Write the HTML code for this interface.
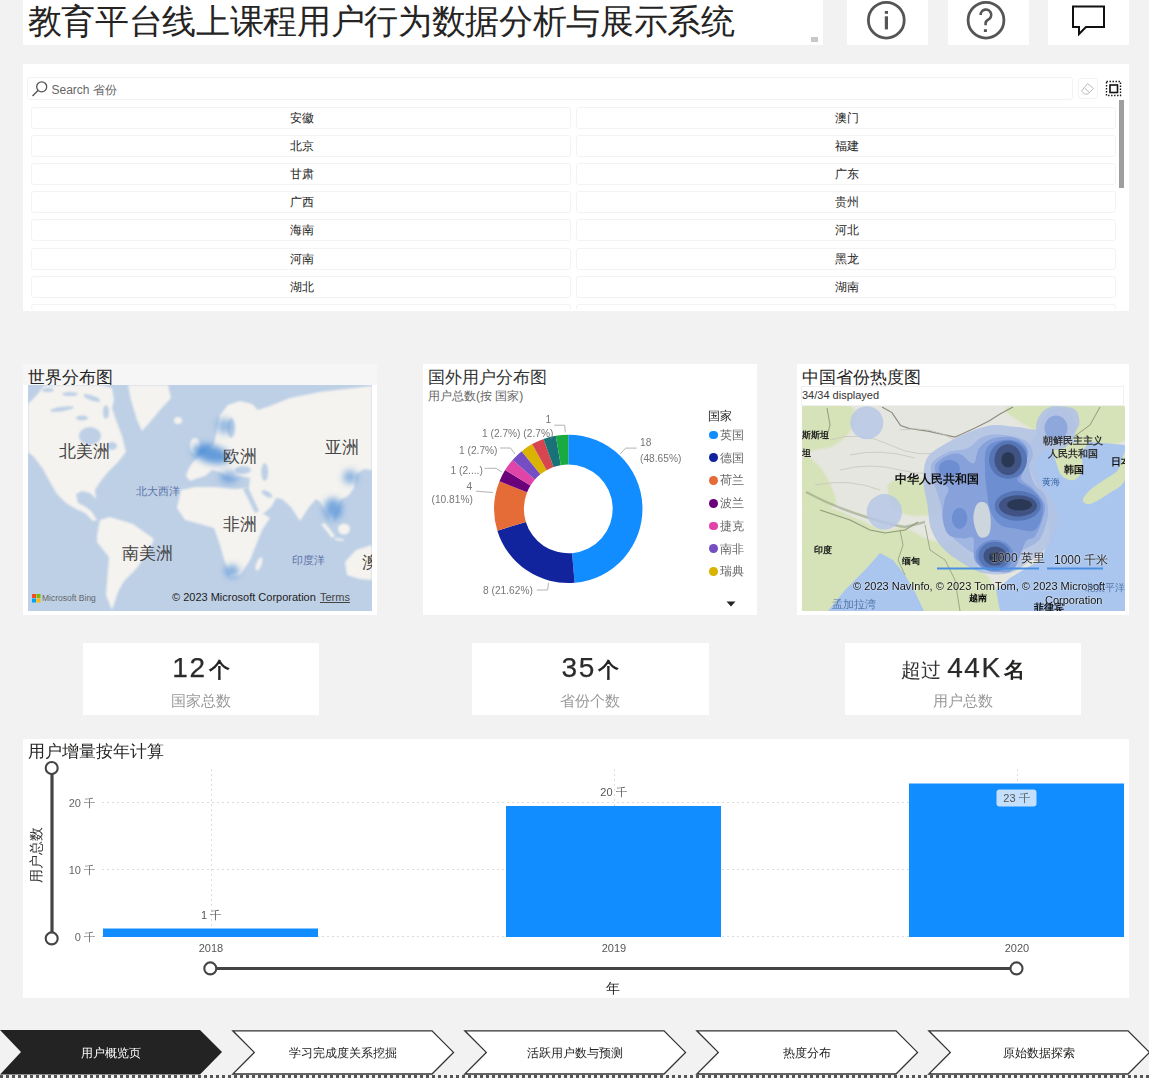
<!DOCTYPE html>
<html><head><meta charset="utf-8">
<style>
*{margin:0;padding:0;box-sizing:border-box}
html,body{width:1149px;height:1078px;overflow:hidden;background:#f2f2f2;font-family:"Liberation Sans",sans-serif;color:#252423}
.a{position:absolute}
.panel{position:absolute;background:#fff}
.t{position:absolute;white-space:nowrap;line-height:1}
.item{position:absolute;height:22px;border:1px solid #f3f3f3;border-radius:3px;background:#fff}
.lbl{position:absolute;white-space:nowrap;font-size:12px;line-height:1;color:#252423}
</style></head>
<body>
<!-- header -->
<div class="panel" style="left:23px;top:0;width:800px;height:45px"></div>
<div class="t" style="left:27.5px;top:4px;font-size:34px;letter-spacing:-0.33px;color:#252423">教育平台线上课程用户行为数据分析与展示系统</div>
<div class="a" style="left:811px;top:37px;width:7px;height:5px;background:#c8c8c8"></div>

<div class="panel" style="left:847px;top:0;width:81px;height:45px"></div>
<div class="panel" style="left:948px;top:0;width:81px;height:45px"></div>
<div class="panel" style="left:1048px;top:0;width:81px;height:45px"></div>
<svg class="a" style="left:0;top:0" width="1149" height="50">
  <circle cx="886.3" cy="20.2" r="17.9" fill="none" stroke="#555" stroke-width="2.8"/>
  <rect x="884.8" y="11" width="3.2" height="2.8" fill="#555"/>
  <rect x="884.8" y="16.3" width="3.2" height="13.1" fill="#555"/>
  <circle cx="986" cy="20.2" r="17.9" fill="none" stroke="#555" stroke-width="2.8"/>
  <path d="M980.6 15 a5.3 5.3 0 1 1 7.6 4.6 c-1.6 0.9 -2.6 1.8 -2.6 3.6 v2" fill="none" stroke="#555" stroke-width="2.6"/>
  <rect x="983.9" y="29.2" width="3" height="2.8" fill="#555"/>
  <path d="M1073 6.5 H1104 V27 H1086 L1079 34 V27 H1073 Z" fill="none" stroke="#111" stroke-width="2"/>
</svg>
<!-- slicer -->
<div class="panel" style="left:23px;top:64px;width:1106px;height:247px"></div>
<div class="item" style="left:27px;top:77px;width:1046px;height:23px;border-color:#f3f3f3"></div>
<svg class="a" style="left:30px;top:80px" width="20" height="20"><circle cx="11.7" cy="6.8" r="5" fill="none" stroke="#555" stroke-width="1.3"/><path d="M8.2 10.3 L2.5 16" stroke="#555" stroke-width="1.4"/></svg>
<div class="t" style="left:51.5px;top:83.5px;font-size:12px;color:#666">Search 省份</div>
<div class="item" style="left:1078px;top:78px;width:20px;height:21px;border-color:#f3f3f3"></div>
<svg class="a" style="left:1080px;top:82px" width="16" height="14"><path d="M7.5 1.5 L13.5 6.5 L8 12 H4.5 L1.5 9 Z M4.5 6 L9.5 10.5" fill="none" stroke="#bbb" stroke-width="1"/></svg>
<svg class="a" style="left:1105px;top:80px" width="18" height="18"><rect x="1.5" y="1.5" width="14" height="14" fill="none" stroke="#111" stroke-width="1.4" stroke-dasharray="1.4 1.6"/><rect x="5" y="5" width="7.5" height="7.5" fill="none" stroke="#111" stroke-width="1.6"/></svg>
<div class="a" style="left:1119px;top:100px;width:5px;height:88px;background:#9e9e9e"></div>
<div class="item" style="left:31px;top:106.5px;width:540px"></div>
<div class="item" style="left:576px;top:106.5px;width:540px"></div>
<div class="lbl" style="left:290px;top:111.5px">安徽</div>
<div class="lbl" style="left:835px;top:111.5px">澳门</div>
<div class="item" style="left:31px;top:134.7px;width:540px"></div>
<div class="item" style="left:576px;top:134.7px;width:540px"></div>
<div class="lbl" style="left:290px;top:139.7px">北京</div>
<div class="lbl" style="left:835px;top:139.7px">福建</div>
<div class="item" style="left:31px;top:162.9px;width:540px"></div>
<div class="item" style="left:576px;top:162.9px;width:540px"></div>
<div class="lbl" style="left:290px;top:167.9px">甘肃</div>
<div class="lbl" style="left:835px;top:167.9px">广东</div>
<div class="item" style="left:31px;top:191.1px;width:540px"></div>
<div class="item" style="left:576px;top:191.1px;width:540px"></div>
<div class="lbl" style="left:290px;top:196.1px">广西</div>
<div class="lbl" style="left:835px;top:196.1px">贵州</div>
<div class="item" style="left:31px;top:219.3px;width:540px"></div>
<div class="item" style="left:576px;top:219.3px;width:540px"></div>
<div class="lbl" style="left:290px;top:224.3px">海南</div>
<div class="lbl" style="left:835px;top:224.3px">河北</div>
<div class="item" style="left:31px;top:247.5px;width:540px"></div>
<div class="item" style="left:576px;top:247.5px;width:540px"></div>
<div class="lbl" style="left:290px;top:252.5px">河南</div>
<div class="lbl" style="left:835px;top:252.5px">黑龙</div>
<div class="item" style="left:31px;top:275.7px;width:540px"></div>
<div class="item" style="left:576px;top:275.7px;width:540px"></div>
<div class="lbl" style="left:290px;top:280.7px">湖北</div>
<div class="lbl" style="left:835px;top:280.7px">湖南</div>
<div class="item" style="left:31px;top:303.9px;width:540px;height:6px;border-bottom:none"></div>
<div class="item" style="left:576px;top:303.9px;width:540px;height:6px;border-bottom:none"></div>
<!-- row2 -->
<div class="panel" style="left:23px;top:364px;width:354px;height:251px"></div>
<div class="a" style="left:23px;top:364px;width:354px;height:21px;background:#f6f6f6"></div>
<div class="t" style="left:28px;top:368.5px;font-size:17px;color:#252423">世界分布图</div>
<!--WMAP-->
<svg class="a" style="left:28px;top:385px" width="344" height="226" viewBox="28 385 344 226">
<defs><filter id="bl" x="-50%" y="-50%" width="200%" height="200%"><feGaussianBlur stdDeviation="3.5"/></filter><filter id="bl2"><feGaussianBlur stdDeviation="1"/></filter></defs>
<rect x="28" y="385" width="344" height="226" fill="#bed0e6"/>
<g fill="#f5f3ef" filter="url(#bl2)">
<path d="M28 404 L36 396 L44 386 L60 385 L80 385 L100 385 L112 388 L114 400 L112 408 L116 420 L122 436 L126 452 L118 462 L108 472 L100 482 L95 490 L96 499 L90 493 L82 491 L76 494 L78 503 L86 507 L92 512 L97 520 L93 521 L85 513 L76 509 L66 503 L57 494 L50 482 L43 469 L34 457 L28 452 Z"/>
<path d="M128 385 L168 385 L171 398 L160 410 L150 422 L142 431 L137 420 L131 400 Z"/>
<path d="M97 535 L100 520 L110 517 L133 524 L154 539 L148 553 L136 569 L124 581 L118 592 L112 610 L106 595 L109 557 L97 542 Z"/>
<path d="M186 476 L188 470 L193 462 L200 456 L208 450 L214 444 L217 430 L220 415 L228 405 L240 401 L252 404 L258 410 L270 406 L290 398 L320 392 L345 389 L372 386 L372 470 L364 469 L356 474 L354 488 L348 496 L340 500 L336 510 L332 521 L326 512 L320 502 L316 499 L309 507 L300 521 L291 507 L282 499 L276 498 L272 506 L264 513 L257 514 L252 505 L247 493 L249 487 L250 478 L240 476 L232 478 L226 476 L220 472 L212 470 L205 476 L198 478 L190 481 Z"/>
<path d="M181 490 L195 487 L215 487 L235 489 L248 488 L255 503 L262 513 L270 518 L262 530 L256 545 L250 560 L240 575 L231 577 L225 562 L219 542 L214 528 L200 524 L185 520 L177 508 Z"/>
<path d="M345 562 L356 550 L372 545 L372 580 L360 579 L347 575 Z"/>
<ellipse cx="178" cy="420.5" rx="4" ry="3.5"/><path d="M321 524 L325 523 L335 536 L332 538 Z"/><ellipse cx="344" cy="529" rx="6" ry="5.5"/><path d="M335 538 L344 539 L343 541 L335 540 Z"/><ellipse cx="195" cy="446" rx="5" ry="8"/>
<ellipse cx="259" cy="564" rx="2.6" ry="7" transform="rotate(20 259 564)"/>
</g>
<g fill="#bed0e6" filter="url(#bl2)"><ellipse cx="90" cy="436" rx="11" ry="9"/><ellipse cx="112" cy="446" rx="5" ry="4"/><ellipse cx="264.7" cy="472" rx="3.5" ry="9"/><ellipse cx="243" cy="470" rx="8" ry="4"/><ellipse cx="267" cy="494" rx="6" ry="2.5" transform="rotate(30 267 494)"/><path d="M243 489 L248 487 L259 511 L255 513 Z"/><ellipse cx="231" cy="428" rx="4" ry="10"/><ellipse cx="62" cy="409" rx="12" ry="2.2" transform="rotate(-8 62 409)"/><ellipse cx="92" cy="398" rx="9" ry="2.5" transform="rotate(20 92 398)"/><ellipse cx="70" cy="394" rx="8" ry="2"/><ellipse cx="106" cy="412" rx="3" ry="7"/><ellipse cx="48" cy="390" rx="6" ry="2"/><ellipse cx="82" cy="418" rx="6" ry="2.5"/></g>
<g filter="url(#bl)" fill="#3f86d6">
<ellipse cx="211" cy="454" rx="19" ry="9" transform="rotate(15 211 454)" opacity="0.8"/>
<ellipse cx="224" cy="426" rx="7" ry="8" opacity="0.55"/>
<ellipse cx="229" cy="477" rx="9" ry="6" opacity="0.6"/>
<ellipse cx="350" cy="477" rx="7" ry="7" opacity="0.6"/>
<ellipse cx="333" cy="509" rx="9" ry="11" opacity="0.7"/>
<ellipse cx="232" cy="571" rx="7" ry="6" opacity="0.7"/>
</g>
</svg>
<div class="a" style="left:28px;top:385px;width:344px;height:226px;overflow:hidden"><div class="a" style="left:-28px;top:-385px;width:1149px;height:1078px"><div class="t" style="left:59px;top:443px;font-size:17px;color:#444;">北美洲</div>
<div class="t" style="left:223px;top:447.5px;font-size:17px;color:#444;">欧洲</div>
<div class="t" style="left:325px;top:438.5px;font-size:17px;color:#444;">亚洲</div>
<div class="t" style="left:223px;top:515.5px;font-size:17px;color:#444;">非洲</div>
<div class="t" style="left:122px;top:544.5px;font-size:17px;color:#444;">南美洲</div>
<div class="t" style="left:136px;top:485.5px;font-size:11px;color:#5b73a8;">北大西洋</div>
<div class="t" style="left:292px;top:554.5px;font-size:11px;color:#5b73a8;">印度洋</div>
<div class="t" style="left:362px;top:553.5px;font-size:17px;color:#444;">澳</div>
<div class="t" style="left:172px;top:592px;font-size:11px;color:#222;">© 2023 Microsoft Corporation</div>
<div class="t" style="left:320px;top:592px;font-size:11px;color:#444;text-decoration:underline">Terms</div>
<svg class="a" style="left:32px;top:594px" width="9" height="9"><rect x="0" y="0" width="4" height="4" fill="#f25022"/><rect x="4.5" y="0" width="4" height="4" fill="#7fba00"/><rect x="0" y="4.5" width="4" height="4" fill="#00a4ef"/><rect x="4.5" y="4.5" width="4" height="4" fill="#ffb900"/></svg>
<div class="t" style="left:42px;top:594px;font-size:8.5px;color:#666;">Microsoft Bing</div></div></div>
<!--/WMAP-->
<div class="panel" style="left:423px;top:364px;width:334px;height:251px"></div>
<div class="t" style="left:428px;top:368.5px;font-size:17px;color:#333">国外用户分布图</div>
<div class="t" style="left:428px;top:389.5px;font-size:12px;color:#666">用户总数(按 国家)</div>
<div class="panel" style="left:797px;top:364px;width:332px;height:251px"></div>
<div class="t" style="left:802px;top:368.5px;font-size:17px;color:#252423">中国省份热度图</div>
<div class="a cmaptitlebox" style="left:801px;top:386px;width:323px;height:20px;border:1px solid #f0f0f0"></div>
<div class="t" style="left:802px;top:390px;font-size:11px;color:#333">34/34 displayed</div>
<!--CMAP-->
<svg class="a" style="left:802px;top:406px" width="323" height="205" viewBox="802 406 323 205">
<defs><filter id="cb"><feGaussianBlur stdDeviation="1.2"/></filter><filter id="cb2"><feGaussianBlur stdDeviation="0.6"/></filter></defs>
<rect x="802" y="406" width="323" height="205" fill="#e6e6e0"/>
<g fill="#d6e2b8" filter="url(#cb)">
<path d="M802 406 C810.0 398.3 841.7 402.3 850 406 C858.3 409.7 854.5 421.5 852 428 C849.5 434.5 841.2 441.3 835 445 C828.8 448.7 820.5 448.8 815 450 C809.5 451.2 804.2 459.3 802 452 C799.8 444.7 794.0 413.7 802 406 Z"/>
<path d="M802 458 C804.2 450.8 810.7 458.3 815 462 C819.3 465.7 824.7 472.8 828 480 C831.3 487.2 839.3 500.8 835 505 C830.7 509.2 807.5 512.8 802 505 C796.5 497.2 799.8 465.2 802 458 Z"/>
<path d="M802 505 C806.7 487.8 820.3 505.5 830 508 C839.7 510.5 850.8 516.3 860 520 C869.2 523.7 877.5 528.7 885 530 C892.5 531.3 897.5 526.3 905 528 C912.5 529.7 921.2 537.2 930 540 C938.8 542.8 950.2 540.8 958 545 C965.8 549.2 971.3 558.7 977 565 C982.7 571.3 988.5 575.3 992 583 C995.5 590.7 1029.7 606.3 998 611 C966.3 615.7 834.7 628.7 802 611 C769.3 593.3 797.3 522.2 802 505 Z"/>
<path d="M1012 406 C1029.5 403.3 1106.2 400.3 1125 406 C1143.8 411.7 1130.8 433.5 1125 440 C1119.2 446.5 1100.8 445.0 1090 445 C1079.2 445.0 1068.3 442.2 1060 440 C1051.7 437.8 1046.7 435.0 1040 432 C1033.3 429.0 1024.7 426.3 1020 422 C1015.3 417.7 994.5 408.7 1012 406 Z"/>
<path d="M888 485 C890.5 479.3 906.3 478.0 915 478 C923.7 478.0 935.0 480.5 940 485 C945.0 489.5 946.7 500.0 945 505 C943.3 510.0 937.5 513.8 930 515 C922.5 516.2 907.0 517.0 900 512 C893.0 507.0 885.5 490.7 888 485 Z"/>
</g>
<g fill="#aac6ee" filter="url(#cb2)">
<path d="M1040 430 L1070 440 L1125 445 L1125 611 L1000 611 L996 590 L1010 578 L1040 560 L1050 540 L1048 515 L1040 492 L1030 470 L1025 450 Z"/>
<path d="M880 553 L893 560 L905 575 L915 592 L924 611 L828 611 L845 590 L865 570 Z"/>
</g>
<g fill="#d6e2b8" filter="url(#cb2)">
<path d="M1052 440 C1054.0 436.3 1063.3 438.0 1068 440 C1072.7 442.0 1077.7 447.0 1080 452 C1082.3 457.0 1083.0 465.3 1082 470 C1081.0 474.7 1077.3 479.0 1074 480 C1070.7 481.0 1065.0 479.0 1062 476 C1059.0 473.0 1057.7 468.0 1056 462 C1054.3 456.0 1050.0 443.7 1052 440 Z"/>
<path d="M1125 452 C1123.8 450.3 1121.5 465.3 1118 470 C1114.5 474.7 1108.7 476.7 1104 480 C1099.3 483.3 1093.5 486.7 1090 490 C1086.5 493.3 1083.0 497.7 1083 500 C1083.0 502.3 1085.8 505.0 1090 504 C1094.2 503.0 1102.2 498.0 1108 494 C1113.8 490.0 1122.2 487.0 1125 480 C1127.8 473.0 1126.2 453.7 1125 452 Z"/>
<path d="M1063 446 C1062.2 444.3 1070.5 443.3 1075 442 C1079.5 440.7 1089.2 436.3 1090 438 C1090.8 439.7 1084.5 450.7 1080 452 C1075.5 453.3 1063.8 447.7 1063 446 Z"/>
</g>
<path d="M882 407 L892 412.6 L900.6 425.6 L909 428.4 L929 431.3 L955 437 L962 434 L975 428 L989 421 L1000 414 L1013 407" fill="none" stroke="#8c8c80" stroke-width="1.2"/>
<path d="M820 510 L850 520 L870 530 L885 533 L905 530 L918 522" fill="none" stroke="#7e8a6a" stroke-width="1.2" opacity="0.8"/>
<path d="M827 408 L830 425 L826 440" fill="none" stroke="#7e8a6a" stroke-width="1" opacity="0.8"/>
<g fill="none" stroke="#c9c9c0" stroke-width="1" opacity="0.9">
<path d="M830 440 Q860 430 890 445 T950 450"/>
<path d="M840 470 Q870 462 900 470 T960 468"/>
<path d="M815 485 Q850 478 880 490"/>
<path d="M900 430 Q930 425 955 440"/>
<path d="M850 455 Q880 448 915 458"/>
</g>
<path d="M806 492 Q830 505 860 515 T905 527 L925 522" fill="none" stroke="#8e9a78" stroke-width="2.5" opacity="0.55"/>
<path d="M900 530 L903 545 L898 560 L905 575" fill="none" stroke="#8e9a78" stroke-width="1" opacity="0.8"/>
<path d="M925 525 L930 550 L945 560 L955 580 L960 611" fill="none" stroke="#8e9a78" stroke-width="1" opacity="0.8"/>
<path d="M1063 446 L1075 436 L1090 425 L1100 407" fill="none" stroke="#7e8a6a" stroke-width="1" opacity="0.8"/>
<g filter="url(#cb2)">
<path d="M927.3 457.8 C930.8 451.7 937.9 448.5 944.6 444.3 C951.3 440.1 959.6 436.0 967.6 432.8 C975.6 429.6 984.3 426.1 992.6 425.1 C1000.9 424.2 1010.2 426.5 1017.6 427.1 C1025.0 427.8 1032.3 430.9 1036.8 429.0 C1041.3 427.1 1041.0 419.2 1044.5 415.5 C1048.0 411.8 1052.8 407.8 1057.9 406.9 C1063.0 405.9 1071.7 406.8 1075.2 409.8 C1078.7 412.8 1080.3 420.3 1079.0 425.1 C1077.7 429.9 1073.2 434.1 1067.5 438.6 C1061.8 443.1 1049.9 447.5 1044.5 452.0 C1039.1 456.5 1035.2 460.1 1034.9 465.5 C1034.6 470.9 1039.6 478.9 1042.5 484.7 C1045.4 490.4 1049.5 494.2 1052.1 500.0 C1054.7 505.8 1057.9 512.9 1057.9 519.3 C1057.9 525.7 1054.3 533.4 1052.1 538.5 C1049.9 543.6 1048.3 546.2 1044.5 550.0 C1040.7 553.8 1034.9 557.7 1029.1 561.5 C1023.3 565.3 1017.6 571.1 1009.9 573.0 C1002.2 574.9 991.3 574.9 983.0 573.0 C974.7 571.1 966.6 565.6 959.9 561.5 C953.2 557.4 947.5 553.5 942.7 548.1 C937.9 542.7 933.7 536.3 931.1 528.9 C928.5 521.5 928.6 511.9 927.3 503.9 C926.0 495.9 923.4 488.5 923.4 480.8 C923.4 473.1 923.8 463.9 927.3 457.8 Z" fill="#b3c3e4" opacity="0.9"/>
<ellipse cx="1056" cy="428" rx="20" ry="22" fill="#b3c3e4" opacity="0.9"/>
<circle cx="866.8" cy="422.7" r="16.5" fill="#b6c7e6" opacity="0.85"/>
<circle cx="884.4" cy="511.8" r="17.7" fill="#b6c7e6" opacity="0.85"/>
<path d="M933.1 461.6 C936.0 458.4 942.6 454.2 948.4 452.0 C954.1 449.8 961.8 450.8 967.6 448.2 C973.4 445.6 977.2 438.9 983.0 436.7 C988.8 434.4 995.2 434.1 1002.2 434.7 C1009.2 435.3 1020.2 437.3 1025.3 440.5 C1030.4 443.7 1032.3 449.4 1032.9 453.9 C1033.5 458.4 1028.8 462.3 1029.1 467.4 C1029.4 472.5 1032.3 480.2 1034.9 484.7 C1037.5 489.2 1042.3 489.8 1044.5 494.3 C1046.7 498.8 1048.3 505.8 1048.3 511.6 C1048.3 517.4 1046.4 523.8 1044.5 528.9 C1042.6 534.0 1041.3 538.5 1036.8 542.3 C1032.3 546.1 1024.0 549.3 1017.6 551.9 C1011.2 554.5 1005.5 557.4 998.4 557.7 C991.3 558.0 982.0 556.4 975.3 553.8 C968.6 551.2 963.1 546.8 958.0 542.3 C952.9 537.8 947.5 533.3 944.6 526.9 C941.7 520.5 942.3 510.6 940.7 503.9 C939.1 497.2 936.6 492.1 935.0 486.6 C933.4 481.2 931.4 475.4 931.1 471.2 C930.8 467.0 930.2 464.8 933.1 461.6 Z" fill="#a2b6e2"/>
<ellipse cx="1056" cy="428" rx="11.5" ry="12.5" fill="#8ea8dc"/>
<path d="M935.0 465.5 C936.3 461.7 942.4 457.8 946.5 455.9 C950.6 454.0 955.4 452.6 959.9 453.9 C964.4 455.2 970.2 464.4 973.4 463.5 C976.6 462.6 976.0 452.3 979.2 448.2 C982.4 444.1 986.9 440.4 992.6 438.6 C998.4 436.8 1007.9 436.0 1013.7 437.6 C1019.5 439.2 1025.3 443.6 1027.2 448.2 C1029.1 452.8 1026.3 460.4 1025.3 465.5 C1024.3 470.6 1020.1 475.1 1021.4 478.9 C1022.7 482.7 1029.1 484.3 1032.9 488.5 C1036.8 492.7 1042.9 498.8 1044.5 503.9 C1046.1 509.0 1044.1 513.9 1042.5 519.3 C1040.9 524.7 1037.8 532.7 1034.9 536.5 C1032.0 540.3 1028.8 536.8 1025.3 542.3 C1021.8 547.8 1018.8 564.4 1013.7 569.2 C1008.6 574.0 1000.9 572.4 994.5 571.1 C988.1 569.8 978.8 566.9 975.3 561.5 C971.8 556.1 975.3 542.3 973.4 538.5 C971.5 534.7 968.0 539.1 963.8 538.5 C959.6 537.9 951.9 538.1 948.4 534.6 C944.9 531.1 943.3 523.1 942.7 517.3 C942.1 511.5 943.7 504.8 944.6 500.0 C945.5 495.2 949.4 492.0 948.4 488.5 C947.4 485.0 941.0 482.7 938.8 478.9 C936.6 475.1 933.7 469.3 935.0 465.5 Z" fill="#87a1da"/>
<path d="M986.8 448.2 C989.4 443.7 995.2 441.6 1000.3 440.5 C1005.4 439.4 1013.1 439.6 1017.6 441.5 C1022.1 443.4 1026.2 447.1 1027.2 452.0 C1028.2 456.9 1024.9 466.4 1023.3 471.2 C1021.7 476.0 1016.0 477.6 1017.6 480.8 C1019.2 484.0 1028.8 486.5 1032.9 490.4 C1037.1 494.2 1041.2 498.8 1042.5 503.9 C1043.8 509.0 1042.2 516.7 1040.6 521.2 C1039.0 525.7 1036.7 529.5 1032.9 530.8 C1029.1 532.1 1023.0 529.9 1017.6 528.9 C1012.2 527.9 1004.8 527.9 1000.3 525.0 C995.8 522.1 993.0 517.4 990.7 511.6 C988.5 505.8 987.8 497.8 986.8 490.4 C985.8 483.0 984.9 474.4 984.9 467.4 C984.9 460.4 984.2 452.7 986.8 448.2 Z" fill="#6e8ed2"/>
<ellipse cx="949.4" cy="468.4" rx="10.6" ry="8.6" fill="#6e8ed2"/>
<ellipse cx="959.6" cy="518.3" rx="7.7" ry="10.6" fill="#6e8ed2"/>
<ellipse cx="994.5" cy="555.7" rx="19" ry="16" fill="#6e8ed2"/>
<ellipse cx="1008" cy="459.7" rx="19" ry="19" fill="#5674b5"/>
<ellipse cx="1017.6" cy="505.8" rx="23" ry="15" fill="#5674b5"/>
<ellipse cx="994.5" cy="555.7" rx="16" ry="14" fill="#5674b5"/>
<ellipse cx="1008" cy="459.7" rx="13.4" ry="15.4" fill="#3f5282"/>
<ellipse cx="1018" cy="505.8" rx="19" ry="10.6" fill="#3f5282"/>
<ellipse cx="995" cy="556" rx="11.5" ry="9.6" fill="#3f5282"/>
<ellipse cx="1008" cy="459.7" rx="6.7" ry="7.7" fill="#2c3956"/>
<ellipse cx="1019.5" cy="504.8" rx="12.5" ry="5.8" fill="#2c3956"/>
<ellipse cx="995" cy="557" rx="6" ry="5" fill="#2c3956"/>
<path d="M977.2 503.9 C979.4 501.3 984.5 501.3 986.8 503.9 C989.0 506.5 990.4 514.2 990.7 519.3 C991.0 524.4 990.7 531.7 988.8 534.6 C986.9 537.5 981.8 539.0 979.2 536.5 C976.6 534.0 973.7 524.7 973.4 519.3 C973.1 513.9 975.0 506.5 977.2 503.9 Z" fill="#cdd6dd"/>
</g>
<line x1="937" y1="568.5" x2="1039" y2="568.5" stroke="#4a90e2" stroke-width="2.2"/>
<line x1="1047" y1="568.5" x2="1103" y2="568.5" stroke="#4a90e2" stroke-width="2.2"/>
</svg>
<div class="a" style="left:802px;top:406px;width:323px;height:205px;overflow:hidden"><div class="a" style="left:-802px;top:-406px;width:1149px;height:1078px"><div class="t" style="left:802px;top:431px;font-size:9px;color:#222;font-weight:bold">斯斯坦</div>
<div class="t" style="left:802px;top:449px;font-size:9px;color:#222;font-weight:bold">坦</div>
<div class="t" style="left:895px;top:472.5px;font-size:12px;color:#111;font-weight:bold">中华人民共和国</div>
<div class="t" style="left:1043px;top:435.5px;font-size:10px;color:#333;font-weight:bold">朝鲜民主主义</div>
<div class="t" style="left:1048px;top:449px;font-size:10px;color:#333;font-weight:bold">人民共和国</div>
<div class="t" style="left:1064px;top:464.5px;font-size:10px;color:#111;font-weight:bold">韩国</div>
<div class="t" style="left:1111px;top:456.5px;font-size:10px;color:#111;font-weight:bold">日本</div>
<div class="t" style="left:1042px;top:477.5px;font-size:9px;color:#3b63a6;">黄海</div>
<div class="t" style="left:814px;top:545.5px;font-size:9px;color:#111;font-weight:bold">印度</div>
<div class="t" style="left:902px;top:556.5px;font-size:9px;color:#111;font-weight:bold">缅甸</div>
<div class="t" style="left:832px;top:599px;font-size:11px;color:#5577aa;">孟加拉湾</div>
<div class="t" style="left:991px;top:552px;font-size:12px;color:#222;text-shadow:0 0 2px #fff">1000 英里</div>
<div class="t" style="left:1054px;top:553.5px;font-size:12px;color:#222;text-shadow:0 0 2px #fff">1000 千米</div>
<div class="t" style="left:853px;top:581px;font-size:11px;color:#111;text-shadow:0 0 2px #fff">© 2023 NavInfo, © 2023 TomTom, © 2023 Microsoft</div>
<div class="t" style="left:1045px;top:595px;font-size:11px;color:#111;text-shadow:0 0 2px #fff">Corporation</div>
<div class="t" style="left:969px;top:594px;font-size:9px;color:#111;font-weight:bold">越南</div>
<div class="t" style="left:1034px;top:602.5px;font-size:10px;color:#111;font-weight:bold">菲律宾</div>
<div class="t" style="left:1085px;top:583px;font-size:10px;color:#5577aa;">北太平洋</div></div></div>
<!--/CMAP-->
<svg class="a" style="left:0;top:0" width="1149" height="1078"><path d="M568.30 434.70 A74.2 74.2 0 0 1 574.59 582.83 L572.07 553.14 A44.4 44.4 0 0 0 568.30 464.50 Z" fill="#118DFF"/><path d="M574.59 582.83 A74.2 74.2 0 0 1 497.35 530.63 L525.85 521.90 A44.4 44.4 0 0 0 572.07 553.14 Z" fill="#12239E"/><path d="M497.35 530.63 A74.2 74.2 0 0 1 499.45 481.23 L527.10 492.35 A44.4 44.4 0 0 0 525.85 521.90 Z" fill="#E66C37"/><path d="M499.45 481.23 A74.2 74.2 0 0 1 505.12 470.00 L530.49 485.62 A44.4 44.4 0 0 0 527.10 492.35 Z" fill="#6B007B"/><path d="M505.12 470.00 A74.2 74.2 0 0 1 512.60 459.88 L534.97 479.57 A44.4 44.4 0 0 0 530.49 485.62 Z" fill="#E044A7"/><path d="M512.60 459.88 A74.2 74.2 0 0 1 521.69 451.17 L540.41 474.36 A44.4 44.4 0 0 0 534.97 479.57 Z" fill="#744EC2"/><path d="M521.69 451.17 A74.2 74.2 0 0 1 532.11 444.12 L546.65 470.14 A44.4 44.4 0 0 0 540.41 474.36 Z" fill="#D9B300"/><path d="M532.11 444.12 A74.2 74.2 0 0 1 543.58 438.94 L553.51 467.04 A44.4 44.4 0 0 0 546.65 470.14 Z" fill="#D64550"/><path d="M543.58 438.94 A74.2 74.2 0 0 1 555.76 435.77 L560.80 465.14 A44.4 44.4 0 0 0 553.51 467.04 Z" fill="#197278"/><path d="M555.76 435.77 A74.2 74.2 0 0 1 568.30 434.70 L568.30 464.50 A44.4 44.4 0 0 0 560.80 465.14 Z" fill="#1AAB40"/><path d="M565.3 432.4 L564.7 425.2 L554.2 425.2" fill="none" stroke="#b3b3b3" stroke-width="1"/><path d="M500 448 L510.5 448 L515 454" fill="none" stroke="#b3b3b3" stroke-width="1"/><path d="M484.4 468.3 L496.1 468.3 L502 472.2" fill="none" stroke="#b3b3b3" stroke-width="1"/><path d="M475.9 491.2 L492.9 492.5" fill="none" stroke="#b3b3b3" stroke-width="1"/><path d="M620.2 454 L625.7 448.1 L636.6 448.1" fill="none" stroke="#b3b3b3" stroke-width="1"/><path d="M548.5 582.8 L547.6 590 L536.8 590" fill="none" stroke="#b3b3b3" stroke-width="1"/></svg>
<div class="t" style="left:545.5px;top:415.3px;font-size:10.2px;color:#777">1</div>
<div class="t" style="left:482.0px;top:429.3px;font-size:10.2px;color:#777">1 (2.7%) (2.7%)</div>
<div class="t" style="left:459.0px;top:445.8px;font-size:10.2px;color:#777">1 (2.7%)</div>
<div class="t" style="left:450.5px;top:465.8px;font-size:10.2px;color:#777">1 (2....)</div>
<div class="t" style="left:466.5px;top:482.3px;font-size:10.2px;color:#777">4</div>
<div class="t" style="left:431.5px;top:495.3px;font-size:10.2px;color:#777">(10.81%)</div>
<div class="t" style="left:640.0px;top:438px;font-size:10.2px;color:#777">18</div>
<div class="t" style="left:640.0px;top:453.8px;font-size:10.2px;color:#777">(48.65%)</div>
<div class="t" style="left:483.0px;top:585.8px;font-size:10.2px;color:#777">8 (21.62%)</div>
<div class="t" style="left:708px;top:410px;font-size:12px;color:#252423">国家</div>
<div class="a" style="left:708.9px;top:430.5px;width:8.8px;height:8.8px;border-radius:50%;background:#118DFF"></div>
<div class="t" style="left:720px;top:428.9px;font-size:12px;color:#666">英国</div>
<div class="a" style="left:708.9px;top:453.2px;width:8.8px;height:8.8px;border-radius:50%;background:#12239E"></div>
<div class="t" style="left:720px;top:451.6px;font-size:12px;color:#666">德国</div>
<div class="a" style="left:708.9px;top:476.0px;width:8.8px;height:8.8px;border-radius:50%;background:#E66C37"></div>
<div class="t" style="left:720px;top:474.4px;font-size:12px;color:#666">荷兰</div>
<div class="a" style="left:708.9px;top:498.8px;width:8.8px;height:8.8px;border-radius:50%;background:#6B007B"></div>
<div class="t" style="left:720px;top:497.1px;font-size:12px;color:#666">波兰</div>
<div class="a" style="left:708.9px;top:521.5px;width:8.8px;height:8.8px;border-radius:50%;background:#E044A7"></div>
<div class="t" style="left:720px;top:519.9px;font-size:12px;color:#666">捷克</div>
<div class="a" style="left:708.9px;top:544.2px;width:8.8px;height:8.8px;border-radius:50%;background:#744EC2"></div>
<div class="t" style="left:720px;top:542.6px;font-size:12px;color:#666">南非</div>
<div class="a" style="left:708.9px;top:567.0px;width:8.8px;height:8.8px;border-radius:50%;background:#D9B300"></div>
<div class="t" style="left:720px;top:565.4px;font-size:12px;color:#666">瑞典</div>
<svg class="a" style="left:726px;top:601px" width="10" height="6"><path d="M0.5 0.5 H9.5 L5 5.5 Z" fill="#252423"/></svg>
<!-- KPI -->
<div class="panel" style="left:83px;top:643px;width:236px;height:72px"></div>
<div class="t" style="left:83px;top:654px;width:236px;text-align:center"><span style="font-size:28px;color:#2b2b2b;letter-spacing:1.6px;-webkit-text-stroke:0.25px #2b2b2b">12</span><span style="font-size:21px;color:#252423;font-weight:bold;margin-left:2px">个</span></div>
<div class="t" style="left:83px;top:692.5px;width:236px;text-align:center;font-size:15px;color:#999">国家总数</div>
<div class="panel" style="left:471.5px;top:643px;width:237.5px;height:72px"></div>
<div class="t" style="left:471.5px;top:654px;width:237.5px;text-align:center"><span style="font-size:28px;color:#2b2b2b;letter-spacing:1.6px;-webkit-text-stroke:0.25px #2b2b2b">35</span><span style="font-size:21px;color:#252423;font-weight:bold;margin-left:2px">个</span></div>
<div class="t" style="left:471.5px;top:692.5px;width:237.5px;text-align:center;font-size:15px;color:#999">省份个数</div>
<div class="panel" style="left:845px;top:643px;width:236px;height:72px"></div>
<div class="t" style="left:845px;top:654px;width:236px;text-align:center"><span style="font-size:20px;color:#333;margin-right:6px">超过</span><span style="font-size:28px;color:#2b2b2b;letter-spacing:1.6px;-webkit-text-stroke:0.25px #2b2b2b">44K</span><span style="font-size:21px;color:#252423;font-weight:bold;margin-left:2px">名</span></div>
<div class="t" style="left:845px;top:692.5px;width:236px;text-align:center;font-size:15px;color:#999">用户总数</div>
<!-- bar chart -->
<div class="panel" style="left:23px;top:739px;width:1106px;height:259px"></div>
<div class="t" style="left:28px;top:743px;font-size:17px;color:#252423">用户增量按年计算</div>
<svg class="a" style="left:0;top:0" width="1149" height="1078">
<line x1="102" y1="802.5" x2="1124" y2="802.5" stroke="#dcdcdc" stroke-width="1" stroke-dasharray="2 3"/>
<line x1="102" y1="869.5" x2="1124" y2="869.5" stroke="#dcdcdc" stroke-width="1" stroke-dasharray="2 3"/>
<line x1="102" y1="936.5" x2="1124" y2="936.5" stroke="#dcdcdc" stroke-width="1" stroke-dasharray="2 3"/>
<line x1="211.5" y1="769" x2="211.5" y2="937" stroke="#dcdcdc" stroke-width="1" stroke-dasharray="2 3"/>
<line x1="614.5" y1="769" x2="614.5" y2="937" stroke="#dcdcdc" stroke-width="1" stroke-dasharray="2 3"/>
<line x1="1017.5" y1="769" x2="1017.5" y2="937" stroke="#dcdcdc" stroke-width="1" stroke-dasharray="2 3"/>
<rect x="103" y="928.5" width="215" height="8.5" fill="#118DFF"/>
<rect x="506" y="806" width="215" height="131" fill="#118DFF"/>
<rect x="909" y="783.5" width="215" height="153.5" fill="#118DFF"/>
<rect x="996.5" y="789.5" width="40" height="17" rx="3" fill="#c4dffb"/>
<line x1="52" y1="768" x2="52" y2="938" stroke="#444" stroke-width="3.2"/>
<circle cx="51.7" cy="768" r="6" fill="#fff" stroke="#444" stroke-width="2.1"/>
<circle cx="51.7" cy="938.4" r="6" fill="#fff" stroke="#444" stroke-width="2.1"/>
<line x1="210" y1="968.5" x2="1016" y2="968.5" stroke="#444" stroke-width="3.2"/>
<circle cx="210.3" cy="968.4" r="6" fill="#fff" stroke="#444" stroke-width="2.1"/>
<circle cx="1016.5" cy="968.4" r="6" fill="#fff" stroke="#444" stroke-width="2.1"/>
</svg>
<div class="t" style="left:0;top:797.5px;width:95px;text-align:right;font-size:11px;color:#666">20 千</div>
<div class="t" style="left:0;top:864.5px;width:95px;text-align:right;font-size:11px;color:#666">10 千</div>
<div class="t" style="left:0;top:931.5px;width:95px;text-align:right;font-size:11px;color:#666">0 千</div>
<div class="t" style="left:171px;top:910px;width:80px;text-align:center;font-size:11px;color:#555">1 千</div>
<div class="t" style="left:573.5px;top:787px;width:80px;text-align:center;font-size:11px;color:#555">20 千</div>
<div class="t" style="left:976.5px;top:792.5px;width:80px;text-align:center;font-size:11px;color:#555">23 千</div>
<div class="t" style="left:171px;top:942.5px;width:80px;text-align:center;font-size:11px;color:#555">2018</div>
<div class="t" style="left:574px;top:942.5px;width:80px;text-align:center;font-size:11px;color:#555">2019</div>
<div class="t" style="left:977px;top:942.5px;width:80px;text-align:center;font-size:11px;color:#555">2020</div>
<div class="t" style="left:29px;top:883px;font-size:14px;color:#333;transform:rotate(-90deg);transform-origin:0 0">用户总数</div>
<div class="t" style="left:606px;top:981px;font-size:14px;color:#252423">年</div>
<!-- tabs -->
<svg class="a" style="left:0;top:0" width="1149" height="1078">
<path d="M0 1030 H200 L222 1052 L200 1074.5 H0 L21 1052 Z" fill="#232323"/>
<path d="M232.8 1030.8 H432 L453.5 1052.4 L432 1074 H232.8 L254.3 1052.4 Z" fill="#fff" stroke="#333" stroke-width="1.3"/>
<path d="M464.8 1030.8 H664 L685.5 1052.4 L664 1074 H464.8 L486.3 1052.4 Z" fill="#fff" stroke="#333" stroke-width="1.3"/>
<path d="M696.8 1030.8 H896 L917.5 1052.4 L896 1074 H696.8 L718.3 1052.4 Z" fill="#fff" stroke="#333" stroke-width="1.3"/>
<path d="M928.8 1030.8 H1128 L1149.5 1052.4 L1128 1074 H928.8 L950.3 1052.4 Z" fill="#fff" stroke="#333" stroke-width="1.3"/>
<line x1="0" y1="1076.5" x2="1149" y2="1076.5" stroke="#555" stroke-width="3" stroke-dasharray="3 3"/>
</svg>
<div class="t" style="left:0px;top:1046.5px;width:222px;text-align:center;font-size:12px;color:#fff">用户概览页</div>
<div class="t" style="left:232px;top:1046.5px;width:222px;text-align:center;font-size:12px;color:#252423">学习完成度关系挖掘</div>
<div class="t" style="left:464px;top:1046.5px;width:222px;text-align:center;font-size:12px;color:#252423">活跃用户数与预测</div>
<div class="t" style="left:696px;top:1046.5px;width:222px;text-align:center;font-size:12px;color:#252423">热度分布</div>
<div class="t" style="left:928px;top:1046.5px;width:222px;text-align:center;font-size:12px;color:#252423">原始数据探索</div>
</body></html>
